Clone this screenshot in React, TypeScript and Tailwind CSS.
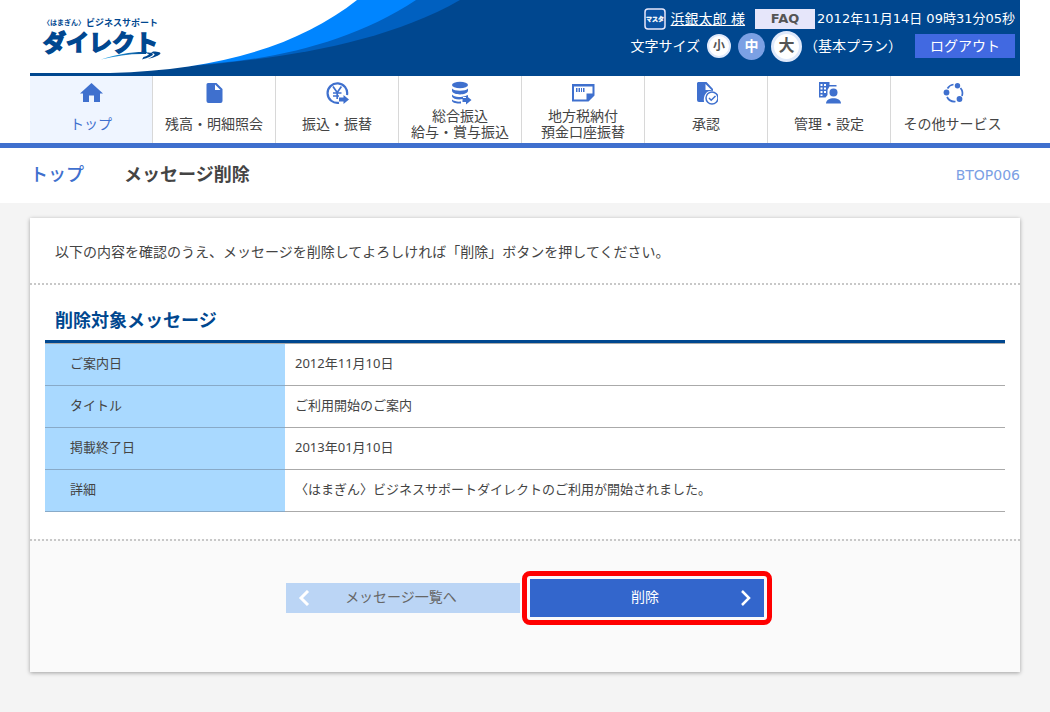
import type { ReactNode } from 'react'

const menu: { lines: string[]; icon: ReactNode; active?: boolean }[] = [
  {
    lines: ['トップ'],
    active: true,
    icon: <path d="M12.500 2 1 12.500H4V21h6v-6.500h5V21h6v-8.500h3z" />,
  },
  {
    lines: ['残高・明細照会'],
    icon: <path fillRule="evenodd" d="M6 2h8.500l6 6v12a2 2 0 0 1-2 2h-12a2 2 0 0 1-2-2V3.500A1.500 1.500 0 0 1 6 2zM13 3.500V9h5.500z" />,
  },
  {
    lines: ['振込・振替'],
    icon: (
      <>
        <path fill="none" stroke="currentColor" strokeWidth="2.200" d="M14 21.800A9.800 9.800 0 1 1 22 14" />
        <path fill="none" stroke="currentColor" strokeWidth="1.700" d="M8 5.500l4.200 6 4.200-6M8 12h8.500M8 15h6M12.200 12v6" />
        <path d="M14 16.500h4.500v-2.500l5.500 4.500-5.500 4.500v-2.500h-4.500z" />
      </>
    ),
  },
  {
    lines: ['総合振込', '給与・賞与振込'],
    icon: (
      <>
        <ellipse cx="12" cy="4" rx="8" ry="3.200" />
        <path d="M4 7.500c2 3 14 3 16 0V10c-1 4.500-15 4.500-16 0zM4 13.500c2 3 9 3.500 16 0.500v2h-5v2c-5 1-10 0-11-2.500z" />
        <path d="M4 18.500c2 1.800 6 2.500 9 2V22.500c-5 .500-9-1-9-3zM14.500 17h3.500v-2.500l5.500 4.500-5.500 4.500V21h-3.500z" />
      </>
    ),
  },
  {
    lines: ['地方税納付', '預金口座振替'],
    icon: (
      <>
        <path fillRule="evenodd" d="M1 3h22.500v11.500l-6 6H1zM3 5.500v13h12.500v-6h6v-7z" />
        <path d="M5 7h1.500v4H5zM7.500 7H9v4H7.500zM10 7h1v4h-1zM12 7h1.500v4H12z" />
      </>
    ),
  },
  {
    lines: ['承認'],
    icon: (
      <>
        <path fillRule="evenodd" d="M4 1h8.500l6.500 7v2c-6-1-10 4-9 11H5a2 2 0 0 1-2-2V2zM11.500 3v6h6z" />
        <circle cx="18" cy="17" r="6" fill="none" stroke="currentColor" strokeWidth="1.500" />
        <path fill="none" stroke="currentColor" strokeWidth="1.500" d="m15 17 2.200 2.200L21.500 15" />
      </>
    ),
  },
  {
    lines: ['管理・設定'],
    icon: (
      <>
        <path fillRule="evenodd" d="M2 1h10.500v3h7v1.500h-7L10.500 9v5l-2 2.500H2zM3.500 3v2h2V3zM7 3v2h2V3zM3.500 6.500v2h2v-2zM7 6.500v2h2v-2zM3.500 10v2h2v-2zM7 10v2h2v-2zM3.500 13.500v1.500h2v-1.500z" />
        <circle cx="16.500" cy="11.500" r="4" />
        <path d="M9 22.500c0-7 15-7 15 0z" />
      </>
    ),
  },
  {
    lines: ['その他サービス'],
    icon: (
      <>
        <path fill="none" stroke="currentColor" strokeWidth="1.700" d="M6.500 7.500a8 8 0 0 1 6-4M6 16a8.500 8.500 0 0 0 8.500 4.500M19.500 7a8.500 8.500 0 0 1 1.500 8" />
        <circle cx="16.500" cy="4.700" r="2.700" />
        <circle cx="5.500" cy="11.500" r="2.900" />
        <circle cx="18.500" cy="18" r="2.900" />
      </>
    ),
  },
]

const details = [
  ['ご案内日', '2012年11月10日'],
  ['タイトル', 'ご利用開始のご案内'],
  ['掲載終了日', '2013年01月10日'],
  ['詳細', '〈はまぎん〉ビジネスサポートダイレクトのご利用が開始されました。'],
]

function Logo() {
  return (
    <svg width="130" height="52" viewBox="0 0 130 52" className="text-[#004790]" fill="currentColor" fontWeight="700">
      <defs>
        <linearGradient id="swoosh">
          <stop offset="0" stopColor="#30b0f0" />
          <stop offset="1" stopColor="#004790" />
        </linearGradient>
      </defs>
      <text x="1" y="15" fontSize="7">〈はまぎん〉</text>
      <text x="44" y="16" fontSize="9">ビジネスサポート</text>
      <text x="1" y="41" fontSize="23" stroke="currentColor" strokeWidth="1.500">ダイレクト</text>
      <path fill="url(#swoosh)" d="M59 49.500c16-5.500 32-8 46-7.500l-1 2c-14-.500-29 1.500-45 5.500z" />
      <path d="M105 42.500c9 0 8 3.500-5 7l1.500-2.500c5-1.500 7-3 3.500-3.500z" />
      <path d="M111 41.500c12 0 9 4-5 7.500 7-3.500 9-5.500 3-6z" />
    </svg>
  )
}

function Header() {
  return (
    <header className="mx-auto max-w-[990px]">
      <div className="relative flex justify-between bg-[#00478f]">
        <svg className="absolute top-0 left-0" width="440" height="76" viewBox="30 0 440 76" aria-hidden="true">
          <path fill="#0060c0" d="M180 67C270 60 380 46 460 0H300z" />
          <path fill="#0085ff" d="M150 70 180 66C260 62 345 47 416 0H300z" />
          <path fill="#fff" d="M30 0V73H110C220 70 300 45 357 0z" />
        </svg>
        <a href="#top" aria-label="〈はまぎん〉ビジネスサポートダイレクト" className="relative ml-3 mt-[10px]">
          <Logo />
        </a>
        <div className="relative flex h-[76px] flex-col items-end px-[5px] pt-2 text-sm text-white">
          <div className="flex h-[22px] items-center">
            <svg className="mr-[5px]" width="22" height="22" viewBox="0 0 22 22">
              <rect x="1" y="1" width="20" height="20" rx="3" fill="#0a52a4" stroke="#e6e6fa" strokeWidth="1.500" />
              <text x="11" y="13" textAnchor="middle" fontSize="6" fontWeight="700" fill="#fff" stroke="#fff" strokeWidth=".300">マスタ</text>
            </svg>
            <a href="#user" className="mr-[10px] underline">浜銀太郎 様</a>
            <a href="#faq" className="mr-[2px] flex h-5 w-[60px] items-center justify-center bg-[#e6e6fa] text-[13px] font-bold text-[#555]">FAQ</a>
            <time className="text-[13px]">2012年11月14日 09時31分05秒</time>
          </div>
          <div className="flex h-8 items-center">
            <span className="mr-[7px]">文字サイズ</span>
            <button className="mr-[7px] size-6 rounded-full border-2 border-[#dfe9fb] bg-white text-xs leading-5 font-bold text-[#555]">小</button>
            <button className="mr-[6px] size-[27px] rounded-full bg-[#7ba0e4] font-bold">中</button>
            <button className="mr-[2px] size-[31px] rounded-full border-3 border-[#dfe9fb] bg-white text-base leading-6 font-bold text-[#555]">大</button>
            <span className="mr-[13px]">（基本プラン）</span>
            <button className="h-6 w-[100px] bg-[#4169e1]">ログアウト</button>
          </div>
        </div>
      </div>
      <nav className="grid grid-cols-8 pr-[6px]">
        {menu.map((item) => (
          <a
            key={item.lines[0]}
            href="#menu"
            className={`flex h-[67px] flex-col items-center border-r border-[#d8d8d8] pt-[5px] text-sm leading-4 last:border-r-0 ${item.active ? 'bg-[#eff5ff] text-[#3f70ce]' : 'text-[#444]'}`}
          >
            <svg className="size-6 shrink-0 text-[#3f70ce]" viewBox="0 0 24 24" fill="currentColor" aria-hidden="true">
              {item.icon}
            </svg>
            <span className="flex flex-1 flex-col items-center justify-center">
              {item.lines.map((line) => (
                <span key={line} className="whitespace-nowrap">{line}</span>
              ))}
            </span>
          </a>
        ))}
      </nav>
    </header>
  )
}

export default function App() {
  return (
    <div lang="ja" className="min-h-screen bg-[#f4f4f4] font-['DejaVu_Sans','Noto_Sans_CJK_JP',sans-serif] text-[#444]">
      <div className="bg-white">
        <Header />
        <div className="border-t-5 border-[#3f70ce]">
          <div className="mx-auto flex h-[55px] max-w-[990px] items-center pb-[2px] text-lg">
            <a href="#top" className="mr-10 font-medium text-[#3f70ce]">トップ</a>
            <h1 className="font-bold">メッセージ削除</h1>
            <span className="ml-auto text-sm text-[#7ba0e4]">BTOP006</span>
          </div>
        </div>
      </div>

      <main className="mx-auto max-w-[990px] pt-[15px] pb-10">
        <div className="bg-white shadow-[0_1px_4px_rgba(0,0,0,0.35)]">
          <p className="border-b-2 border-dotted border-[#c8c8c8] px-[25px] pt-6 pb-5 text-sm leading-[21px]">
            以下の内容を確認のうえ、メッセージを削除してよろしければ「削除」ボタンを押してください。
          </p>
          <section className="px-[15px] pt-[22px] pb-[27px]">
            <h2 className="border-b-3 border-[#00478f] px-[10px] pb-[5px] text-lg leading-7 font-bold text-[#00478f]">削除対象メッセージ</h2>
            <table className="w-full border-t border-[#aaa] font-['Noto_Sans','Noto_Sans_CJK_JP',sans-serif] text-[13px] leading-[22px]">
              <tbody>
                {details.map(([label, value]) => (
                  <tr key={label}>
                    <th scope="row" className="w-1/4 border-b border-[#88aac8] bg-[#a9d9ff] pt-2 pr-2 pb-[11px] pl-[25px] text-left font-normal">{label}</th>
                    <td className="border-b border-[#aaa] px-[10px] pt-2 pb-[11px]">{value}</td>
                  </tr>
                ))}
              </tbody>
            </table>
          </section>
          <div className="flex items-center justify-center gap-[10px] border-t-2 border-dotted border-[#c8c8c8] bg-[#fafafa] pt-[38px] pb-[55px] text-sm">
            <button className="flex h-[30px] w-[234px] items-center bg-[#bbd5f5] px-3 text-[#666]">
              <svg className="h-4 w-3" viewBox="0 0 12 16" fill="none" stroke="#fff" strokeWidth="3" aria-hidden="true">
                <path d="M10 1 3 8l7 7" />
              </svg>
              <span className="flex-1 pr-4 pb-[3px]">メッセージ一覧へ</span>
            </button>
            <button className="relative flex h-[38px] w-[234px] items-center bg-[#36c] px-3 text-white">
              <span className="pointer-events-none absolute -inset-2 rounded-lg border-5 border-[#f00]" />
              <span className="flex-1 pb-[3px] pl-2">削除</span>
              <svg className="h-4 w-3" viewBox="0 0 12 16" fill="none" stroke="#fff" strokeWidth="2.500" aria-hidden="true">
                <path d="m2 1 7 7-7 7" />
              </svg>
            </button>
          </div>
        </div>
      </main>
    </div>
  )
}
